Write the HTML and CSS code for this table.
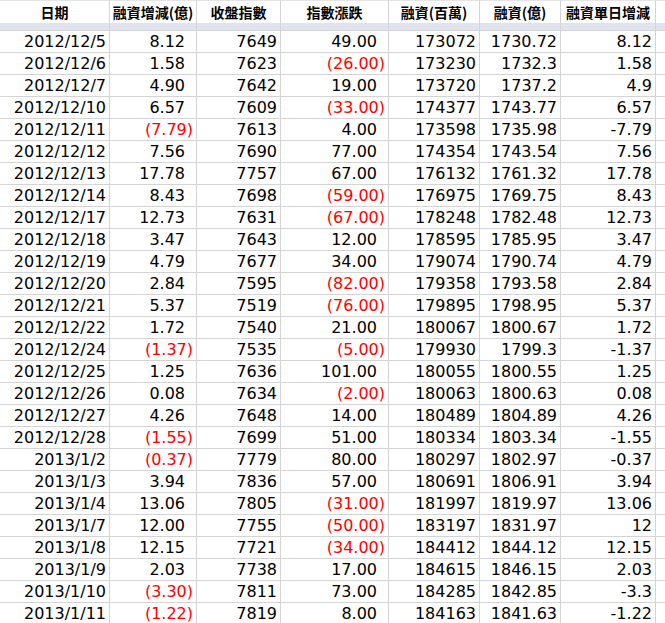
FILE: index.html
```html
<!DOCTYPE html>
<html lang="zh-Hant">
<head>
<meta charset="utf-8">
<title>融資</title>
<link rel="stylesheet" href="styles.css">
</head>
<body>
<table class="sheet">
<colgroup>
<col class="c1"><col class="c2"><col class="c3"><col class="c4"><col class="c5"><col class="c6"><col class="c7"><col class="c8">
</colgroup>
<thead>
<tr class="head"><th>日期</th><th>融資增減(億)</th><th>收盤指數</th><th>指數漲跌</th><th>融資(百萬)</th><th>融資(億)</th><th>融資單日增減</th><th></th></tr>
<tr class="band"><td></td><td></td><td></td><td></td><td></td><td></td><td></td><td></td></tr>
</thead>
<tbody>
<tr><td>2012/12/5</td><td class="pos">8.12</td><td>7649</td><td class="pos">49.00</td><td>173072</td><td>1730.72</td><td>8.12</td><td></td></tr>
<tr><td>2012/12/6</td><td class="pos">1.58</td><td>7623</td><td class="neg">(26.00)</td><td>173230</td><td>1732.3</td><td>1.58</td><td></td></tr>
<tr><td>2012/12/7</td><td class="pos">4.90</td><td>7642</td><td class="pos">19.00</td><td>173720</td><td>1737.2</td><td>4.9</td><td></td></tr>
<tr><td>2012/12/10</td><td class="pos">6.57</td><td>7609</td><td class="neg">(33.00)</td><td>174377</td><td>1743.77</td><td>6.57</td><td></td></tr>
<tr><td>2012/12/11</td><td class="neg">(7.79)</td><td>7613</td><td class="pos">4.00</td><td>173598</td><td>1735.98</td><td>-7.79</td><td></td></tr>
<tr><td>2012/12/12</td><td class="pos">7.56</td><td>7690</td><td class="pos">77.00</td><td>174354</td><td>1743.54</td><td>7.56</td><td></td></tr>
<tr><td>2012/12/13</td><td class="pos">17.78</td><td>7757</td><td class="pos">67.00</td><td>176132</td><td>1761.32</td><td>17.78</td><td></td></tr>
<tr><td>2012/12/14</td><td class="pos">8.43</td><td>7698</td><td class="neg">(59.00)</td><td>176975</td><td>1769.75</td><td>8.43</td><td></td></tr>
<tr><td>2012/12/17</td><td class="pos">12.73</td><td>7631</td><td class="neg">(67.00)</td><td>178248</td><td>1782.48</td><td>12.73</td><td></td></tr>
<tr><td>2012/12/18</td><td class="pos">3.47</td><td>7643</td><td class="pos">12.00</td><td>178595</td><td>1785.95</td><td>3.47</td><td></td></tr>
<tr><td>2012/12/19</td><td class="pos">4.79</td><td>7677</td><td class="pos">34.00</td><td>179074</td><td>1790.74</td><td>4.79</td><td></td></tr>
<tr><td>2012/12/20</td><td class="pos">2.84</td><td>7595</td><td class="neg">(82.00)</td><td>179358</td><td>1793.58</td><td>2.84</td><td></td></tr>
<tr><td>2012/12/21</td><td class="pos">5.37</td><td>7519</td><td class="neg">(76.00)</td><td>179895</td><td>1798.95</td><td>5.37</td><td></td></tr>
<tr><td>2012/12/22</td><td class="pos">1.72</td><td>7540</td><td class="pos">21.00</td><td>180067</td><td>1800.67</td><td>1.72</td><td></td></tr>
<tr><td>2012/12/24</td><td class="neg">(1.37)</td><td>7535</td><td class="neg">(5.00)</td><td>179930</td><td>1799.3</td><td>-1.37</td><td></td></tr>
<tr><td>2012/12/25</td><td class="pos">1.25</td><td>7636</td><td class="pos">101.00</td><td>180055</td><td>1800.55</td><td>1.25</td><td></td></tr>
<tr><td>2012/12/26</td><td class="pos">0.08</td><td>7634</td><td class="neg">(2.00)</td><td>180063</td><td>1800.63</td><td>0.08</td><td></td></tr>
<tr><td>2012/12/27</td><td class="pos">4.26</td><td>7648</td><td class="pos">14.00</td><td>180489</td><td>1804.89</td><td>4.26</td><td></td></tr>
<tr><td>2012/12/28</td><td class="neg">(1.55)</td><td>7699</td><td class="pos">51.00</td><td>180334</td><td>1803.34</td><td>-1.55</td><td></td></tr>
<tr><td>2013/1/2</td><td class="neg">(0.37)</td><td>7779</td><td class="pos">80.00</td><td>180297</td><td>1802.97</td><td>-0.37</td><td></td></tr>
<tr><td>2013/1/3</td><td class="pos">3.94</td><td>7836</td><td class="pos">57.00</td><td>180691</td><td>1806.91</td><td>3.94</td><td></td></tr>
<tr><td>2013/1/4</td><td class="pos">13.06</td><td>7805</td><td class="neg">(31.00)</td><td>181997</td><td>1819.97</td><td>13.06</td><td></td></tr>
<tr><td>2013/1/7</td><td class="pos">12.00</td><td>7755</td><td class="neg">(50.00)</td><td>183197</td><td>1831.97</td><td>12</td><td></td></tr>
<tr><td>2013/1/8</td><td class="pos">12.15</td><td>7721</td><td class="neg">(34.00)</td><td>184412</td><td>1844.12</td><td>12.15</td><td></td></tr>
<tr><td>2013/1/9</td><td class="pos">2.03</td><td>7738</td><td class="pos">17.00</td><td>184615</td><td>1846.15</td><td>2.03</td><td></td></tr>
<tr><td>2013/1/10</td><td class="neg">(3.30)</td><td>7811</td><td class="pos">73.00</td><td>184285</td><td>1842.85</td><td>-3.3</td><td></td></tr>
<tr><td>2013/1/11</td><td class="neg">(1.22)</td><td>7819</td><td class="pos">8.00</td><td>184163</td><td>1841.63</td><td>-1.22</td><td></td></tr>
</tbody>
</table>
</body>
</html>
```
FILE: styles.css
```css
html, body {
  margin: 0;
  padding: 0;
  background: #ffffff;
}
.sheet {
  border-collapse: separate;
  border-spacing: 0;
  table-layout: fixed;
  width: 680px;
  font-family: "DejaVu Sans", sans-serif;
  font-size: 16px;
  color: #000;
}
.c1 { width: 110px; }
.c2 { width: 87px; }
.c3 { width: 84px; }
.c4 { width: 108px; }
.c5 { width: 91px; }
.c6 { width: 81px; }
.c7 { width: 95px; }
.c8 { width: 24px; }
.sheet th, .sheet td {
  box-sizing: border-box;
  border-right: 1px solid #d4d4d4;
  border-bottom: 1px solid #d4d4d4;
  padding: 0 3px 0 0;
  white-space: nowrap;
  overflow: hidden;
}
.head th {
  height: 23px;
  border-bottom: none;
  border-top: 1px solid #e4e4e4;
  font-family: "Noto Sans CJK TC", sans-serif;
  font-size: 14px;
  font-weight: bold;
  text-align: center;
  padding: 0;
  line-height: 20px;
}
.band td {
  height: 8px;
  background: #dfe3ee;
  border-right-color: #d0d4de;
}
tbody td {
  height: 22px;
  text-align: right;
  line-height: 20px;
  vertical-align: middle;
}
tbody td.pos { padding-right: 11px; }
tbody td.neg { color: #ff0000; padding-right: 3px; }
```
